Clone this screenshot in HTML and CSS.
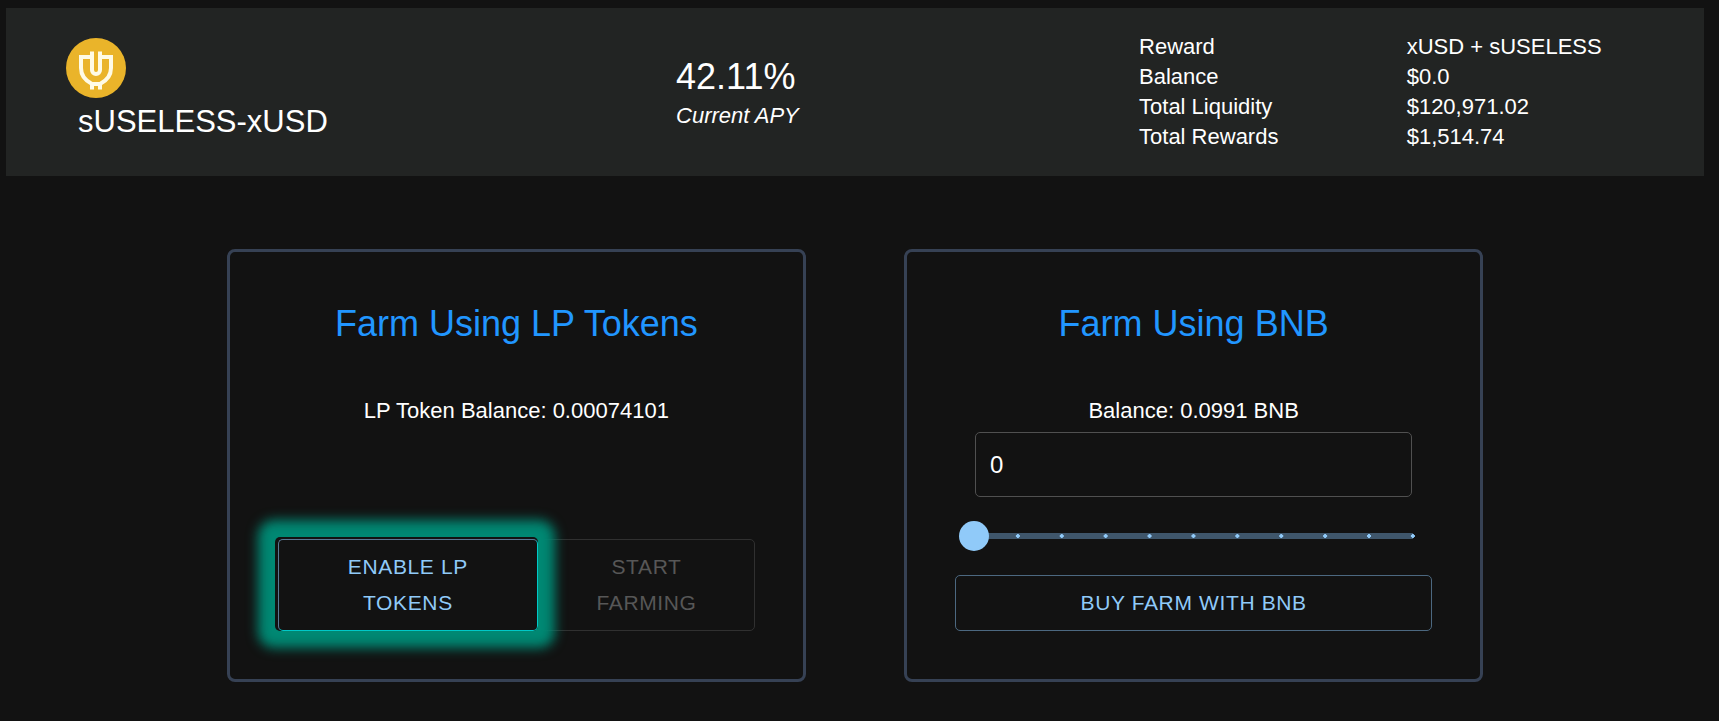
FILE: index.html
```
<!DOCTYPE html>
<html lang="en">
<head>
  <meta charset="UTF-8" />
  <meta name="viewport" content="width=device-width, initial-scale=1" />
  <title>sUSELESS-xUSD Farm</title>
  <link rel="stylesheet" href="styles.css">
</head>

<body>
  <header class="pool">
    <div class="pool-name">
      <svg class="logo" viewBox="0 0 60 60" aria-hidden="true">
        <circle cx="30" cy="30" r="30" fill="#eab42a" />
        <g fill="none" stroke="#fffbe6" stroke-width="4">
          <path d="M26 13.500V32a4 4 0 0 0 8 0V13.500" />
          <path d="M26 19H15v11c0 9 5 13 11 16h8c6-3 11-7 11-16V19H34" />
          <path d="M26 45v6.500M34 45v6.500" />
        </g>
      </svg>
      <h1>sUSELESS-xUSD</h1>
    </div>

    <div class="apy">
      <div class="apy-value">42.11%</div>
      <em>Current APY</em>
    </div>

    <dl class="stats">
      <dt>Reward</dt>
      <dd>xUSD + sUSELESS</dd>
      <dt>Balance</dt>
      <dd>$0.0</dd>
      <dt>Total Liquidity</dt>
      <dd>$120,971.02</dd>
      <dt>Total Rewards</dt>
      <dd>$1,514.74</dd>
    </dl>
  </header>

  <main class="cards">
    <section class="card">
      <h2>Farm Using LP Tokens</h2>
      <p>LP Token Balance: 0.00074101</p>
      <div class="button-group">
        <button type="button" class="btn highlight">Enable LP Tokens</button>
        <button type="button" class="btn" disabled>Start Farming</button>
      </div>
    </section>

    <section class="card">
      <h2>Farm Using BNB</h2>
      <p><label for="amount">Balance: 0.0991 BNB</label></p>
      <input type="text" id="amount" class="amount" value="0">
      <input type="range" class="slider" min="0" max="100" step="10" value="0" aria-label="Percent of balance">
      <button type="button" class="btn">Buy Farm With BNB</button>
    </section>
  </main>

<script>
  const amount = document.getElementById("amount");
  const slider = document.querySelector(".slider");
  const balance = 0.0991;

  slider.addEventListener("input", () => {
    amount.value = balance * slider.value / 100;
  });
</script>
</body>
</html>
```
FILE: styles.css
```
* {
  box-sizing: border-box;
}

body {
  margin: 0;
  padding: 8px 15px 0 6px;
  background-color: #121212;
  color: white;
  font-family: "Liberation Sans", Arial, sans-serif;
  font-size: 22px;
  line-height: 30px;
}

h1, h2, p, dl, dd {
  margin: 0;
  font-weight: normal;
}

/* Pool header */
.pool {
  display: grid;
  grid-template-columns: 36% 32% 1fr;
  align-items: center;
  padding: 24px 60px;
  background-color: #222423;
}

.logo {
  display: block;
  width: 60px;
  height: 60px;
}

.pool-name h1 {
  padding-left: 12px;
  font-size: 31px;
  line-height: 48px;
}

.apy {
  padding-left: 42px;
}

.apy-value {
  font-size: 36px;
  line-height: 48px;
}

.stats {
  display: grid;
  grid-template-columns: 53% 1fr;
}

/* Farm cards */
.cards {
  display: grid;
  grid-template-columns: 1fr 1fr;
  gap: 98px;
  padding: 73px 13% 0;
}

.card {
  display: flex;
  flex-direction: column;
  padding: 48px;
  border: 3px solid #364154;
  border-radius: 8px;
  text-align: center;
}

.card h2 {
  margin-bottom: 48px;
  color: #2196ff;
  font-size: 36px;
  line-height: 48px;
}

.btn {
  padding: 9px 24px;
  background: none;
  border: 1px solid #4c6880;
  border-radius: 5px;
  color: #90caf9;
  font-family: inherit;
  font-size: 21px;
  line-height: 36px;
  letter-spacing: 0.03em;
  text-transform: uppercase;
  cursor: pointer;
}

.btn:disabled {
  border-color: #303030;
  color: #575757;
  cursor: default;
}

.button-group {
  display: grid;
  grid-template-columns: 6fr 5fr;
  margin-top: auto;
}

/* Glow around the next step */
.highlight {
  position: relative;
  border-color: #5a7894 #00c8c8 #00c8c8 #5a7894;
}

.highlight::after {
  content: "";
  position: absolute;
  inset: -3px -1px -1px -4px;
  border-radius: 5px;
  box-shadow: 0 0 12px 17px #008873;
  pointer-events: none;
}

.amount {
  margin: 6px 20px 24px;
  padding: 16px 14px;
  background: none;
  border: 1px solid #505050;
  border-radius: 5px;
  color: white;
  font-family: inherit;
  font-size: 24px;
  line-height: 31px;
}

/* Track runs between the thumb centres, with a tick at each step */
.slider {
  appearance: none;
  height: 30px;
  margin: 0 4px 24px;
  background:
    radial-gradient(circle at 2px 50%, #90caf9 2px, transparent 2px) 13px 50% / calc((100% - 30px) / 10) 30px repeat-x,
    linear-gradient(#3f566b, #3f566b) 50% 50% / calc(100% - 30px) 6px no-repeat;
}

.slider::-webkit-slider-thumb {
  appearance: none;
  width: 30px;
  height: 30px;
  border-radius: 50%;
  background-color: #90caf9;
}
```
